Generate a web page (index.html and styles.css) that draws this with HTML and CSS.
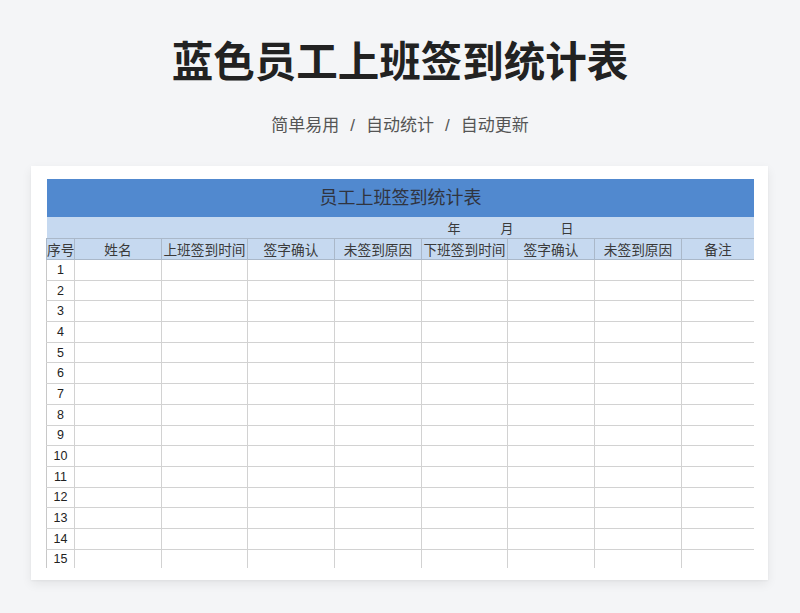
FILE: index.html
```html
<!DOCTYPE html>
<html lang="zh-CN">
<head>
<meta charset="utf-8">
<title>蓝色员工上班签到统计表</title>
<link rel="stylesheet" href="styles.css">
</head>
<body>
<header class="hero">
  <h1 class="title">蓝色员工上班签到统计表</h1>
  <p class="subtitle"><span>简单易用</span><span class="sep">/</span><span>自动统计</span><span class="sep">/</span><span>自动更新</span></p>
</header>
<main class="card">
  <div class="sheet">
    <table class="grid">
      <colgroup>
        <col class="c-no"><col class="c-w"><col class="c-w2"><col class="c-w"><col class="c-w"><col class="c-w2"><col class="c-w"><col class="c-w"><col class="c-last">
      </colgroup>
      <tr class="r-title"><td colspan="9">员工上班签到统计表</td></tr>
      <tr class="r-date"><td colspan="9"><div class="date"><span class="y">年</span><span class="m">月</span><span class="d">日</span></div></td></tr>
      <tr class="r-head">
        <th>序号</th><th>姓名</th><th>上班签到时间</th><th>签字确认</th><th>未签到原因</th><th>下班签到时间</th><th>签字确认</th><th>未签到原因</th><th>备注</th>
      </tr>
      <tr class="r-data"><td>1</td><td></td><td></td><td></td><td></td><td></td><td></td><td></td><td></td></tr>
      <tr class="r-data"><td>2</td><td></td><td></td><td></td><td></td><td></td><td></td><td></td><td></td></tr>
      <tr class="r-data"><td>3</td><td></td><td></td><td></td><td></td><td></td><td></td><td></td><td></td></tr>
      <tr class="r-data"><td>4</td><td></td><td></td><td></td><td></td><td></td><td></td><td></td><td></td></tr>
      <tr class="r-data"><td>5</td><td></td><td></td><td></td><td></td><td></td><td></td><td></td><td></td></tr>
      <tr class="r-data"><td>6</td><td></td><td></td><td></td><td></td><td></td><td></td><td></td><td></td></tr>
      <tr class="r-data"><td>7</td><td></td><td></td><td></td><td></td><td></td><td></td><td></td><td></td></tr>
      <tr class="r-data"><td>8</td><td></td><td></td><td></td><td></td><td></td><td></td><td></td><td></td></tr>
      <tr class="r-data"><td>9</td><td></td><td></td><td></td><td></td><td></td><td></td><td></td><td></td></tr>
      <tr class="r-data"><td>10</td><td></td><td></td><td></td><td></td><td></td><td></td><td></td><td></td></tr>
      <tr class="r-data"><td>11</td><td></td><td></td><td></td><td></td><td></td><td></td><td></td><td></td></tr>
      <tr class="r-data"><td>12</td><td></td><td></td><td></td><td></td><td></td><td></td><td></td><td></td></tr>
      <tr class="r-data"><td>13</td><td></td><td></td><td></td><td></td><td></td><td></td><td></td><td></td></tr>
      <tr class="r-data"><td>14</td><td></td><td></td><td></td><td></td><td></td><td></td><td></td><td></td></tr>
      <tr class="r-data"><td>15</td><td></td><td></td><td></td><td></td><td></td><td></td><td></td><td></td></tr>
    </table>
  </div>
</main>
</body>
</html>
```
FILE: styles.css
```css
* { box-sizing: border-box; }
html, body { margin: 0; padding: 0; }
body {
  background: #f4f5f7;
  font-family: "Noto Sans CJK SC", "Noto Sans", sans-serif;
  color: #222;
  width: 800px;
  height: 613px;
  overflow: hidden;
}
.hero {
  padding-top: 28px;
  text-align: center;
}
.title {
  margin: 0;
  height: 64px;
  line-height: 62px;
  font-size: 41.5px;
  font-weight: 700;
  color: #222;
}
.subtitle {
  margin: 20px 0 0;
  height: 24px;
  line-height: 24px;
  font-size: 17px;
  color: #555;
}
.subtitle .sep {
  margin: 0 11px;
  font-family: "Liberation Sans", sans-serif;
}
.card {
  display: block;
  margin: 30px 0 0 31px;
  width: 737px;
  background: #fff;
  padding: 13px 14px 12px 15px;
  box-shadow: 0 4px 10px rgba(0, 0, 0, 0.07), 0 1px 2px rgba(0, 0, 0, 0.04);
}
.sheet {
  height: 389px;
  overflow: hidden;
}
.grid {
  width: 708px;
  table-layout: fixed;
  border-collapse: collapse;
  font-size: 13px;
  color: #333;
}
.c-no { width: 28px; }
.c-w { width: 87px; }
.c-w2 { width: 86px; }
.c-last { width: 73px; }
.grid td, .grid th { padding: 0; }
.r-title td {
  height: 38px;
  background: #5189cf;
  text-align: center;
  font-size: 18px;
  color: #30343f;
  font-weight: 400;
  padding-bottom: 4px;
}
.r-date td {
  height: 21px;
  background: #c6d9f0;
  font-size: 13px;
  color: #3a3a3a;
}
.date {
  display: flex;
  padding-left: 401px;
  line-height: 21px;
}
.date .m { margin-left: 40px; }
.date .d { margin-left: 47px; }
.r-head th {
  height: 21px;
  background: #c6d9f0;
  border: 1px solid #aab8c9;
  font-weight: 400;
  font-size: 13.7px;
  white-space: nowrap;
  overflow: hidden;
  text-align: center;
  color: #3a3a3a;
}
.r-data td {
  height: 20.7px;
  border: 1px solid #d2d2d2;
  text-align: center;
  font-family: "Liberation Sans", sans-serif;
  font-size: 12.5px;
  color: #222;
}
.r-data td:first-child { border-left-color: #c8c8c8; }
```
